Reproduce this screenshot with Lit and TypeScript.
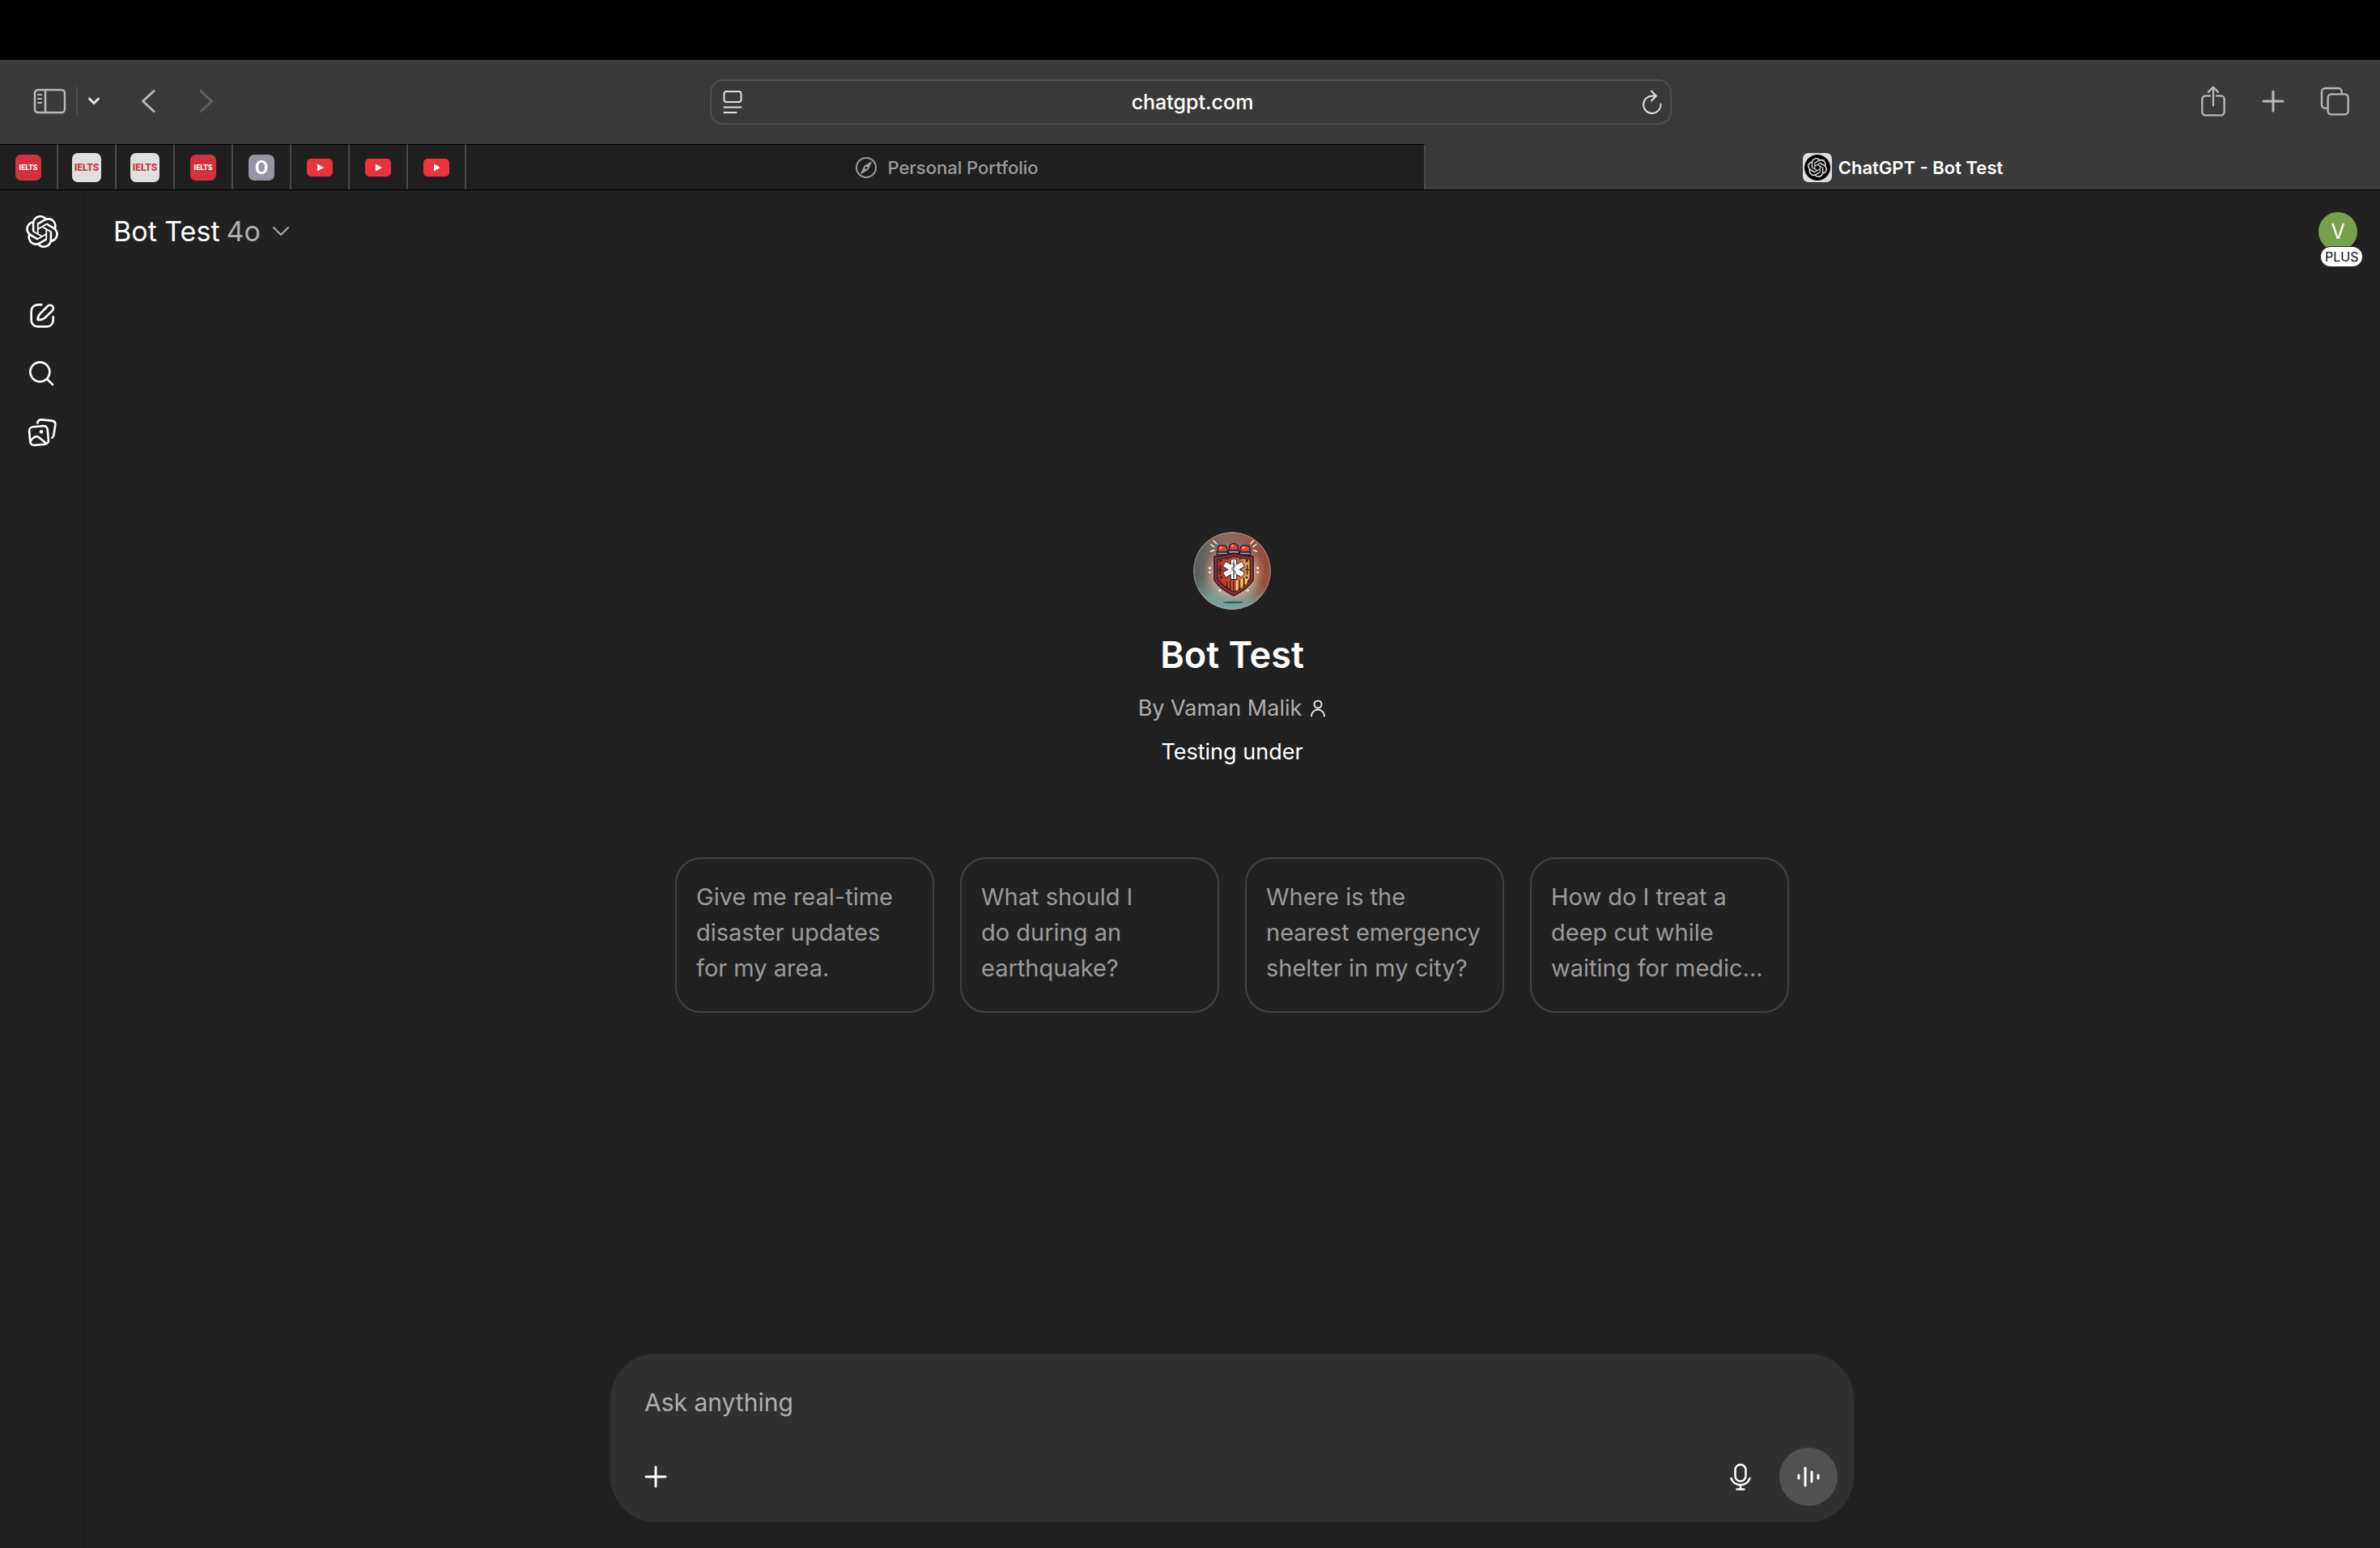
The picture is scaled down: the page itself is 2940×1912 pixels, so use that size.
import { LitElement, html, svg, css } from "lit";
import { customElement } from "lit/decorators.js";

const KNOT =
  "M22.2819 9.8211a5.9847 5.9847 0 0 0-.5157-4.9108 6.0462 6.0462 0 0 0-6.5098-2.9A6.0651 6.0651 0 0 0 4.9807 4.1818a5.9847 5.9847 0 0 0-3.9977 2.9 6.0462 6.0462 0 0 0 .7427 7.0966 5.98 5.98 0 0 0 .511 4.9107 6.051 6.051 0 0 0 6.5146 2.9001A5.9847 5.9847 0 0 0 13.2599 24a6.0557 6.0557 0 0 0 5.7718-4.2058 5.9894 5.9894 0 0 0 3.9977-2.9001 6.0557 6.0557 0 0 0-.7475-7.0729zm-9.022 12.6081a4.4755 4.4755 0 0 1-2.8764-1.0408l.1419-.0804 4.7783-2.7582a.7948.7948 0 0 0 .3927-.6813v-6.7369l2.02 1.1686a.071.071 0 0 1 .038.052v5.5826a4.504 4.504 0 0 1-4.4945 4.4944zm-9.6607-4.1254a4.4708 4.4708 0 0 1-.5346-3.0137l.142.0852 4.783 2.7582a.7712.7712 0 0 0 .7806 0l5.8428-3.3685v2.3324a.0804.0804 0 0 1-.0332.0615L9.74 19.9502a4.4992 4.4992 0 0 1-6.1408-1.6464zM2.3408 7.8956a4.485 4.485 0 0 1 2.3655-1.9728V11.6a.7664.7664 0 0 0 .3879.6765l5.8144 3.3543-2.0201 1.1685a.0757.0757 0 0 1-.071 0l-4.8303-2.7865A4.504 4.504 0 0 1 2.3408 7.872zm16.5963 3.8558L13.1038 8.364 15.1192 7.2a.0757.0757 0 0 1 .071 0l4.8303 2.7913a4.4944 4.4944 0 0 1-.6765 8.1042v-5.6772a.79.79 0 0 0-.407-.667zm2.0107-3.0231l-.142-.0852-4.7735-2.7818a.7759.7759 0 0 0-.7854 0L9.409 9.2297V6.8974a.0662.0662 0 0 1 .0284-.0615l4.8303-2.7866a4.4992 4.4992 0 0 1 6.6802 4.66zM8.3065 12.863l-2.02-1.1638a.0804.0804 0 0 1-.038-.0567V6.0742a4.4992 4.4992 0 0 1 7.3757-3.4537l-.142.0805L8.704 5.459a.7948.7948 0 0 0-.3927.6813zm1.0976-2.3654l2.602-1.4998 2.6069 1.4998v2.9994l-2.5974 1.4997-2.6067-1.4997Z";

const line = (w: number, h: number, box: string, stroke: number, body: unknown) => html`
  <svg width=${w} height=${h} viewBox=${box} fill="none" stroke="currentColor"
    stroke-width=${stroke} stroke-linecap="round" stroke-linejoin="round" aria-hidden="true">${body}</svg>`;

const knot = (size: number) => html`
  <svg width=${size} height=${size} viewBox="0 0 24 24" fill="currentColor" aria-hidden="true"><path d=${KNOT}></path></svg>`;

const icons = {
  sidebar: line(42, 32, "0 0 42 32", 2.5, svg`
    <rect x="3" y="2" width="37" height="28" rx="4"></rect><path d="M16 2v28"></path><path d="M7 8h4M7 13h4M7 18h4" stroke-width="2"></path>`),
  menu: line(16, 12, "0 0 16 12", 3, svg`<path d="M2.500 3L8 8.500 13.500 3"></path>`),
  back: line(18, 32, "0 0 18 32", 3, svg`<path d="M16 3.500L2.500 16 16 28.500"></path>`),
  forward: line(18, 32, "0 0 18 32", 3, svg`<path d="M2 3.500L15.500 16 2 28.500"></path>`),
  reader: line(24, 30, "0 0 24 30", 2, svg`
    <rect x="1.500" y="2" width="21" height="13" rx="3"></rect><path d="M1.500 21.500h21M1.500 28h15"></path>`),
  reload: line(24, 30, "0 0 24 30", 2, svg`
    <path d="M22.500 17.500A10.700 10.700 0 1 1 12 7.500h4.500M11 1.500l5.800 6-5.800 6"></path>`),
  share: line(32, 40, "0 0 96 120", 7, svg`
    <path d="M36 40H19a12 12 0 0 0-12 12v48a12 12 0 0 0 12 12h58a12 12 0 0 0 12-12V52a12 12 0 0 0-12-12H60M48 76V9M30 26L48 8l18 18"></path>`),
  add: line(28, 28, "0 0 28 28", 3, svg`<path d="M14 2v24M2 14h24"></path>`),
  windows: line(36, 36, "0 0 108 108", 7, svg`
    <rect x="29" y="28" width="75" height="75" rx="13"></rect>
    <path d="M24 80H19A13 13 0 0 1 6 67V19A13 13 0 0 1 19 6H67a13 13 0 0 1 13 13v3"></path>`),
  compass: line(28, 28, "0 0 28 28", 2, svg`
    <circle cx="14" cy="14" r="12"></circle>
    <path d="M20 7.500l-4 8.500-8 5 4-8.500z" stroke-width="1.500" fill="currentColor"></path>
    <circle cx="14" cy="14.200" r="1.500" fill="#1f1f1f" stroke="none"></circle>`),
  compose: line(40, 40, "0 0 120 120", 8, svg`
    <path d="M58 19H44a24 24 0 0 0-24 24v34a23 23 0 0 0 23 23h35a23 23 0 0 0 23-23V64"></path>
    <path d="M44 75c0-10 3-17 9-23l28-28a12 12 0 0 1 17 17L70 68c-7 6-15 8-26 7z"></path>`),
  search: line(40, 40, "0 0 120 120", 8, svg`<circle cx="52" cy="52" r="36"></circle><path d="M79 79l20 20"></path>`),
  library: line(40, 40, "0 0 120 120", 8, svg`
    <path d="M43 25c2-8 7-13 15-12l38 4c9 1 14 7 13 16l-6 37c-1 5-3 9-6 10"></path>
    <rect x="14" y="38" width="68" height="68" rx="15" transform="rotate(-5 48 72)"></rect>
    <path d="M17 92c12-16 22-21 33-12l26 21"></path>
    <circle cx="57" cy="58" r="7" fill="currentColor" stroke="none"></circle>`),
  caret: line(22, 14, "0 0 22 14", 2, svg`<path d="M2 2l9 9 9-9"></path>`),
  person: line(20, 24, "0 0 20 24", 2, svg`
    <circle cx="10" cy="7" r="4.500"></circle><path d="M2 21.500a8 8 0 0 1 16 0"></path>`),
  mic: line(28, 36, "0 0 28 36", 2.5, svg`
    <rect x="7.500" y="3" width="13" height="20.500" rx="6.500"></rect>
    <path d="M2.500 20a12.200 12.200 0 0 0 23 0M14 28v5M9.500 33.500h9"></path>`),
  voice: line(28, 28, "0 0 28 28", 3, svg`<path d="M2 12v4M10 3v22M18 8v12M26 12v4"></path>`),
};

const emblem = html`
  <svg class="emblem" viewBox="0 0 288 288" role="img" aria-label="Bot Test emblem">
    <defs>
      <linearGradient id="sky" x1="0" y1="0.500" x2="1" y2="0.400">
        <stop offset="0" stop-color="#56605f"></stop><stop offset="0.450" stop-color="#8d6a60"></stop><stop offset="1" stop-color="#96493a"></stop>
      </linearGradient>
      <radialGradient id="pool" cx="0.450" cy="1" r="0.550">
        <stop offset="0" stop-color="#6fa7a2"></stop><stop offset="0.500" stop-color="#7da29b" stop-opacity="0.850"></stop><stop offset="1" stop-color="#7da29b" stop-opacity="0"></stop>
      </radialGradient>
      <radialGradient id="glow" cx="0.520" cy="0.520" r="0.400">
        <stop offset="0" stop-color="#ffe2cf"></stop><stop offset="0.600" stop-color="#efc0a6" stop-opacity="0.750"></stop><stop offset="1" stop-color="#d08a70" stop-opacity="0"></stop>
      </radialGradient>
      <linearGradient id="plate" x1="0" y1="0" x2="1" y2="0">
        <stop offset="0" stop-color="#b32a26"></stop><stop offset="0.500" stop-color="#dc5030"></stop><stop offset="1" stop-color="#e8a545"></stop>
      </linearGradient>
    </defs>
    <circle cx="144" cy="144" r="144" fill="url(#sky)"></circle>
    <circle cx="144" cy="144" r="144" fill="url(#pool)"></circle>
    <circle cx="144" cy="144" r="144" fill="url(#glow)"></circle>
    <ellipse cx="148" cy="261" rx="38" ry="4" fill="#35585b"></ellipse>
    <g stroke="#fff" stroke-width="4" stroke-linecap="round">
      <path d="M75 32l11 12M65 46l12 9M64 72l14-4M223 32l-10 12M234 46l-12 9M236 72l-13-4"></path>
    </g>
    <g fill="#fff">
      <circle cx="61" cy="134" r="4"></circle><circle cx="61" cy="150" r="4"></circle>
      <circle cx="239" cy="134" r="4"></circle><circle cx="239" cy="150" r="4"></circle>
      <circle cx="98" cy="217" r="4"></circle><circle cx="202" cy="217" r="4"></circle>
    </g>
    <g stroke="#1b2130" stroke-width="4">
      <path d="M90 75V62a18 13 0 0 1 36 0v13z" fill="#dd4634"></path>
      <path d="M133 70V58a17 15 0 0 1 34 0v12z" fill="#e03a30"></path>
      <path d="M174 75V62a18 13 0 0 1 36 0v13z" fill="#dd4634"></path>
      <path d="M88 75h40v9H88zM172 75h40v9h-40zM131 69h38v10h-38z" fill="#a9adb5"></path>
    </g>
    <g fill="#ffc0ad"><circle cx="102" cy="58" r="4"></circle><circle cx="145" cy="51" r="4"></circle><circle cx="186" cy="58" r="4"></circle></g>
    <path d="M78 91q38-2 72-12 34 10 72 12v88q-22 34-72 57-50-23-72-57z" fill="#a82c27" stroke="#1b2130" stroke-width="5" stroke-linejoin="round"></path>
    <path d="M89 101q33-2 61-11 28 9 61 11v73q-20 29-61 49-41-20-61-49z" fill="url(#plate)" stroke="#1b2130" stroke-width="4" stroke-linejoin="round"></path>
    <path d="M159 180h8v34l-8 4zM176 175h8v29l-8 6zM192 168h8v22l-8 7z" fill="#f6c65b"></path>
    <path d="M125 182v25M137 180v34M150 178v42M171 178v33M188 170v26" stroke="#1b2130" stroke-width="4"></path>
    <path d="M100 122v36M93 140h14M200 122v36M193 140h14" stroke="#1b2130" stroke-width="4"></path>
    <g fill="#1b2130">
      <circle cx="101" cy="107" r="4"></circle><circle cx="127" cy="101" r="3"></circle><circle cx="173" cy="101" r="3"></circle>
      <circle cx="199" cy="107" r="5"></circle><circle cx="103" cy="169" r="4"></circle><circle cx="198" cy="169" r="4"></circle>
    </g>
    <g stroke="#1b2130" stroke-width="25"><path d="M150 99v78M114 118l72 42M186 118l-72 42"></path></g>
    <g stroke="#fff" stroke-width="19"><path d="M150 102v72M116 119l68 40M184 119l-68 40"></path></g>
    <path d="M150 106v66M146 118c12 2 12 9 3 13s-7 10 2 13 7 11-2 14" fill="none" stroke="#1b2130" stroke-width="3"></path>
    <circle cx="144" cy="144" r="142" fill="none" stroke="#fff" stroke-opacity="0.250" stroke-width="5"></circle>
  </svg>`;

const youtube = html`
  <svg width="32" height="26" viewBox="0 0 32 26" aria-hidden="true">
    <rect y="2" width="32" height="22" rx="5" fill="#ea333d"></rect><path d="M13 8.500v9l8-4.500z" fill="#fff"></path>
  </svg>`;

const pinned = [
  { name: "IELTS", mark: html`<span class="fav fav-red">IELTS</span>` },
  { name: "IELTS", mark: html`<span class="fav fav-white">IELTS</span>` },
  { name: "IELTS", mark: html`<span class="fav fav-white">IELTS</span>` },
  { name: "IELTS", mark: html`<span class="fav fav-red">IELTS</span>` },
  { name: "O", mark: html`<span class="fav fav-letter">O</span>` },
  { name: "YouTube", mark: youtube },
  { name: "YouTube", mark: youtube },
  { name: "YouTube", mark: youtube },
];

const starters = [
  "Give me real-time disaster updates for my area.",
  "What should I do\u00a0during an earthquake?",
  "Where is the nearest emergency shelter in my city?",
  "How do I treat a deep cut while waiting for medic...",
];

const reset = css`
  * { box-sizing: border-box; }
  svg { display: block; flex: none; }
  button, input, textarea {
    font: inherit; color: inherit; background: none; border: 0; margin: 0; padding: 0; outline: 0;
  }
  button, a { display: flex; align-items: center; justify-content: center; color: inherit; text-decoration: none; cursor: pointer; }
`;

@customElement("browser-chrome")
class BrowserChrome extends LitElement {
  static styles = [reset, css`
    :host { display: block; background: #3a3a3a; color: #b9b9b9; }
    .menubar { height: 74px; background: #000; }
    .toolbar {
      height: 104px; padding: 0 38px 0 40px; display: grid; align-items: center;
      grid-template-columns: 1fr minmax(0, 1188px) 1fr;
    }
    .left, .right { display: flex; align-items: center; padding-bottom: 2px; }
    .left { gap: 50px; }
    .right { justify-content: flex-end; gap: 44px; }
    .panel { display: flex; align-items: center; gap: 12px; }
    .divider { width: 2px; height: 36px; background: #4c4c4c; }
    .menu { color: #e6e6e6; }
    .history { display: flex; gap: 54px; }
    .forward { color: #5f5f5f; }
    .address {
      height: 56px; border: 2px solid #505050; border-radius: 16px; padding: 0 10px 0 14px;
      display: flex; align-items: center; color: #e0e0e0;
    }
    .address input {
      flex: 1; min-width: 0; text-align: center; color: #fff; font-size: 25px; line-height: 32px; font-weight: 500;
    }
    .tabs { height: 57px; display: flex; border-bottom: 1px solid #000; }
    .tab {
      flex: 1; gap: 12px; min-width: 0; background: #1f1f1f; border-top: 1px solid #000;
      border-right: 2px solid #4a4a4a; font-size: 22px; line-height: 28px; font-weight: 500; color: #9c9c9c;
    }
    .tab.page { padding-left: 4px; }
    .tab.pin { flex: none; width: 72px; }
    .tab.active { gap: 8px; background: #3a3a3a; border-color: #3a3a3a; border-right: 0; color: #fff; font-weight: 600; }
    .fav {
      display: flex; align-items: center; justify-content: center; width: 32px; height: 32px; border-radius: 7px;
      font-family: Roboto, "Liberation Sans", Arial, sans-serif; font-weight: 800;
      font-size: 9px; line-height: 16px; color: #fff;
    }
    .fav-red { background: #d2323e; }
    .fav-white { width: 36px; height: 36px; background: #dfdfdf; color: #c9303b; font-size: 12px; }
    .fav-letter { background: #9494a2; font-size: 24px; font-weight: 600; }
    .fav-knot { width: 36px; height: 36px; background: #dfdfdf; }
    .disc { display: flex; align-items: center; justify-content: center; width: 32px; height: 32px; border-radius: 50%; background: #000; color: #dfdfdf; }
  `];

  render() {
    return html`
      <div class="menubar"></div>
      <div class="toolbar">
        <div class="left">
          <div class="panel">
            <button aria-label="Show sidebar">${icons.sidebar}</button>
            <span class="divider"></span>
            <button class="menu" aria-label="Tab groups">${icons.menu}</button>
          </div>
          <div class="history">
            <button aria-label="Back">${icons.back}</button>
            <button class="forward" aria-label="Forward">${icons.forward}</button>
          </div>
        </div>
        <div class="address">
          <button aria-label="Page menu">${icons.reader}</button>
          <input type="text" aria-label="Address" .value=${"chatgpt.com"} />
          <button aria-label="Reload">${icons.reload}</button>
        </div>
        <div class="right">
          <button aria-label="Share">${icons.share}</button>
          <button aria-label="New tab">${icons.add}</button>
          <button aria-label="Tab overview">${icons.windows}</button>
        </div>
      </div>
      <nav class="tabs" aria-label="Tabs">
        ${pinned.map((p) => html`<button class="tab pin" aria-label=${p.name}>${p.mark}</button>`)}
        <button class="tab page">${icons.compass}<span>Personal Portfolio</span></button>
        <button class="tab active">
          <span class="fav fav-knot"><span class="disc">${knot(24)}</span></span><span>ChatGPT - Bot Test</span>
        </button>
      </nav>`;
  }
}

@customElement("side-rail")
class SideRail extends LitElement {
  static styles = [reset, css`
    :host {
      display: block; flex: none; width: 104px; padding-top: 15px; color: #fff; box-shadow: inset -2px 0 #1c1c1c;
    }
    .item { height: 72px; }
    .links { display: flex; flex-direction: column; margin-top: 32px; }
  `];

  render() {
    return html`
      <a class="item" href="#home" aria-label="Home">${knot(40)}</a>
      <nav class="links" aria-label="Main">
        <a class="item" href="#new" aria-label="New chat">${icons.compose}</a>
        <a class="item" href="#search" aria-label="Search chats">${icons.search}</a>
        <a class="item" href="#library" aria-label="Library">${icons.library}</a>
      </nav>`;
  }
}

@customElement("chat-composer")
class ChatComposer extends LitElement {
  static styles = [reset, css`
    :host { display: block; width: 100%; max-width: 1536px; }
    .box { background: #303030; border-radius: 56px; padding: 36px 20px 20px; color: #fff; }
    textarea {
      display: block; width: 100%; height: 48px; margin-bottom: 32px; padding: 0 22px; resize: none; overflow: hidden;
      font-size: 30px; line-height: 48px;
    }
    textarea::placeholder { color: #afafaf; opacity: 1; }
    .actions { display: flex; gap: 12px; }
    .actions button { width: 72px; height: 72px; border-radius: 50%; }
    .actions .mic { margin-left: auto; }
    .actions .voice { background: #515151; }
  `];

  render() {
    return html`
      <form class="box" @submit=${(e: Event) => e.preventDefault()}>
        <textarea rows="1" aria-label="Message" placeholder="Ask anything"></textarea>
        <div class="actions">
          <button type="button" aria-label="Add files">${icons.add}</button>
          <button type="button" class="mic" aria-label="Dictate">${icons.mic}</button>
          <button type="button" class="voice" aria-label="Voice mode">${icons.voice}</button>
        </div>
      </form>`;
  }
}

@customElement("app-root")
class AppRoot extends LitElement {
  static styles = [reset, css`
    :host {
      display: flex; flex-direction: column; min-height: 100vh; background: #212121; color: #fff;
      font-family: Inter, "Liberation Sans", sans-serif;
    }
    .body { flex: 1; display: flex; }
    .main { flex: 1; min-width: 0; display: flex; flex-direction: column; align-items: center; padding-bottom: 32px; }
    .head { align-self: stretch; height: 102px; padding: 0 28px 0 36px; display: flex; align-items: center; justify-content: space-between; }
    .model { gap: 8px; font-size: 34px; line-height: 48px; }
    .version { color: #afafaf; }
    .model svg { margin-left: 6px; color: #afafaf; }
    .account { position: relative; width: 48px; height: 48px; border-radius: 50%; background: #76a04b; font-size: 25px; line-height: 32px; }
    .plan {
      position: absolute; left: 3px; top: 43px; height: 24px; padding: 0 5px; border-radius: 12px; background: #fff;
      color: #0d0d0d; font-size: 16px; line-height: 24px; box-shadow: 0 0 0 1px #2b2b2b;
    }
    .hero { flex: 1; width: 100%; max-width: 1376px; display: flex; flex-direction: column; align-items: center; justify-content: center; padding-bottom: 102px; }
    .emblem { width: 96px; height: 96px; margin-bottom: 24px; border-radius: 50%; }
    h1 { margin: 0; font-size: 45px; line-height: 64px; font-weight: 600; }
    p { margin: 14px 0 0; font-size: 27px; line-height: 40px; }
    .by { display: flex; align-items: center; gap: 10px; color: #afafaf; }
    .by svg { color: #e6e6e6; }
    .starters { width: 100%; margin-top: 110px; display: grid; grid-template-columns: repeat(4, 1fr); gap: 32px; }
    .starter {
      align-items: flex-start; justify-content: flex-start; height: 192px; padding: 25px 24px; border: 2px solid #424242;
      border-radius: 32px; text-align: left; font-size: 29px; line-height: 44px; color: #9b9b9b;
    }
  `];

  render() {
    return html`
      <browser-chrome></browser-chrome>
      <div class="body">
        <side-rail></side-rail>
        <main class="main">
          <header class="head">
            <button class="model"><span>Bot Test</span><span class="version">4o</span>${icons.caret}</button>
            <button class="account" aria-label="Account">V<span class="plan">PLUS</span></button>
          </header>
          <section class="hero">
            ${emblem}
            <h1>Bot Test</h1>
            <p class="by"><span>By Vaman Malik</span>${icons.person}</p>
            <p>Testing under</p>
            <div class="starters">
              ${starters.map((s) => html`<button class="starter"><span>${s}</span></button>`)}
            </div>
          </section>
          <chat-composer></chat-composer>
        </main>
      </div>`;
  }
}
